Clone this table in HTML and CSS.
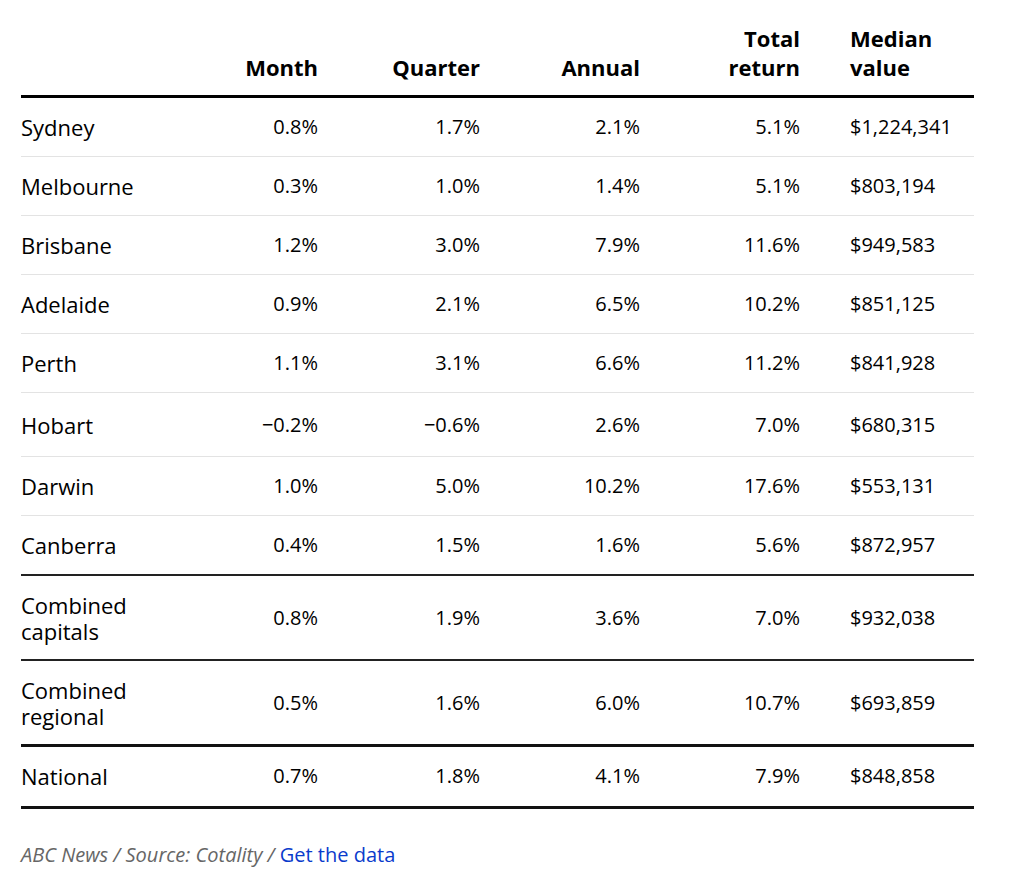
FILE: index.html
```html
<!DOCTYPE html>
<html lang="en">
<head>
    <meta charset="UTF-8">
    <meta name="viewport" content="width=device-width, initial-scale=1.0">
    <title>Home values by city</title>
    <link rel="stylesheet" href="styles.css">
</head>
<body>
    <div class="container">
        <table class="values">
            <colgroup>
                <col class="c-name">
                <col class="c-num">
                <col class="c-num2">
                <col class="c-num">
                <col class="c-num">
                <col class="c-median">
            </colgroup>
            <thead>
                <tr>
                    <th></th>
                    <th class="num">Month</th>
                    <th class="num">Quarter</th>
                    <th class="num">Annual</th>
                    <th class="num">Total<br>return</th>
                    <th class="median">Median<br>value</th>
                </tr>
            </thead>
            <tbody>
                <tr>
                    <td>Sydney</td>
                    <td class="num">0.8%</td>
                    <td class="num">1.7%</td>
                    <td class="num">2.1%</td>
                    <td class="num">5.1%</td>
                    <td class="median">$1,224,341</td>
                </tr>
                <tr>
                    <td>Melbourne</td>
                    <td class="num">0.3%</td>
                    <td class="num">1.0%</td>
                    <td class="num">1.4%</td>
                    <td class="num">5.1%</td>
                    <td class="median">$803,194</td>
                </tr>
                <tr>
                    <td>Brisbane</td>
                    <td class="num">1.2%</td>
                    <td class="num">3.0%</td>
                    <td class="num">7.9%</td>
                    <td class="num">11.6%</td>
                    <td class="median">$949,583</td>
                </tr>
                <tr>
                    <td>Adelaide</td>
                    <td class="num">0.9%</td>
                    <td class="num">2.1%</td>
                    <td class="num">6.5%</td>
                    <td class="num">10.2%</td>
                    <td class="median">$851,125</td>
                </tr>
                <tr>
                    <td>Perth</td>
                    <td class="num">1.1%</td>
                    <td class="num">3.1%</td>
                    <td class="num">6.6%</td>
                    <td class="num">11.2%</td>
                    <td class="median">$841,928</td>
                </tr>
                <tr class="negative">
                    <td>Hobart</td>
                    <td class="num">&minus;0.2%</td>
                    <td class="num">&minus;0.6%</td>
                    <td class="num">2.6%</td>
                    <td class="num">7.0%</td>
                    <td class="median">$680,315</td>
                </tr>
                <tr>
                    <td>Darwin</td>
                    <td class="num">1.0%</td>
                    <td class="num">5.0%</td>
                    <td class="num">10.2%</td>
                    <td class="num">17.6%</td>
                    <td class="median">$553,131</td>
                </tr>
                <tr class="last-city">
                    <td>Canberra</td>
                    <td class="num">0.4%</td>
                    <td class="num">1.5%</td>
                    <td class="num">1.6%</td>
                    <td class="num">5.6%</td>
                    <td class="median">$872,957</td>
                </tr>
                <tr class="combined">
                    <td>Combined capitals</td>
                    <td class="num">0.8%</td>
                    <td class="num">1.9%</td>
                    <td class="num">3.6%</td>
                    <td class="num">7.0%</td>
                    <td class="median">$932,038</td>
                </tr>
                <tr class="combined last-combined">
                    <td>Combined regional</td>
                    <td class="num">0.5%</td>
                    <td class="num">1.6%</td>
                    <td class="num">6.0%</td>
                    <td class="num">10.7%</td>
                    <td class="median">$693,859</td>
                </tr>
                <tr class="national">
                    <td>National</td>
                    <td class="num">0.7%</td>
                    <td class="num">1.8%</td>
                    <td class="num">4.1%</td>
                    <td class="num">7.9%</td>
                    <td class="median">$848,858</td>
                </tr>
            </tbody>
        </table>

        <p class="source">ABC News / Source: Cotality / <a href="#">Get the data</a></p>
    </div>
</body>
</html>
```

FILE: styles.css
```css
*{
    margin: 0;
    padding: 0;
    box-sizing: border-box;
}
body{
    background: #fff;
    color: #000;
    font-family: "Open Sans", "Liberation Sans", sans-serif;
}
.container{
    padding: 20px 50px 0 21px;
}
.values{
    width: 953px;
    border-collapse: collapse;
    table-layout: fixed;
    font-size: 22px;
    line-height: 26px;
}
.c-name{ width: 137px; }
.c-num{ width: 160px; }
.c-num2{ width: 162px; }
.c-median{ width: 174px; }

th{
    font-weight: 700;
    font-size: 22px;
    line-height: 29px;
    vertical-align: bottom;
    padding: 4px 0 13px;
    border-bottom: 3px solid #000;
}
td{
    padding: 16px 0;
    border-bottom: 1px solid #e3e3e3;
    vertical-align: middle;
}
td.num, td.median{
    font-size: 20px;
}
.num{
    text-align: right;
}
.median{
    text-align: left;
    padding-left: 50px;
}
.negative td{
    padding: 19px 0 18px;
}
.negative td.median{
    padding-left: 50px;
}
.last-city td, .combined td{
    border-bottom: 2px solid #222;
}
.combined td{
    padding: 16px 0 15px;
}
.combined td.median{
    padding-left: 50px;
}
.last-combined td{
    border-bottom: 3px solid #111;
}
.national td{
    padding: 16px 0 17px;
    border-bottom: 3px solid #111;
}
.national td.median{
    padding-left: 50px;
}
.source{
    margin-top: 33px;
    font-size: 20px;
    font-style: italic;
    color: #666;
    line-height: 26px;
}
.source a{
    color: #0a3bcc;
    font-style: normal;
    text-decoration: none;
}
```
